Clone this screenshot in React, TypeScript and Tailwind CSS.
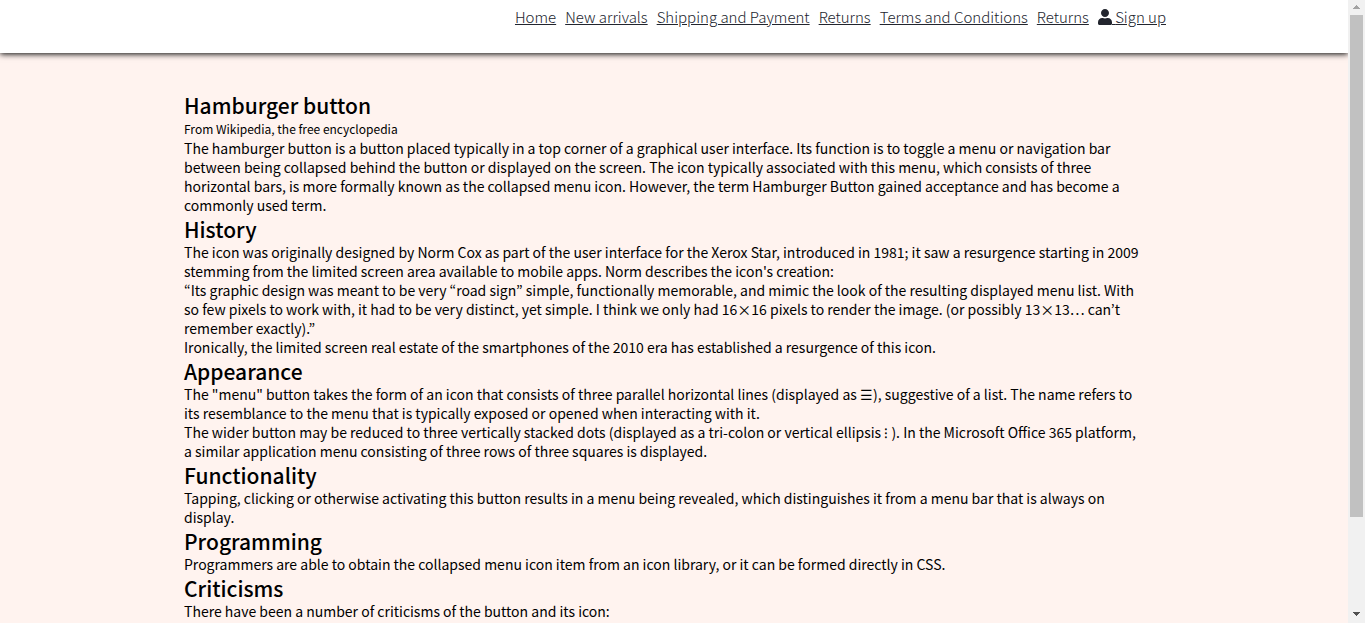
import React from "react";

const navItems = [
  "Home",
  "New arrivals",
  "Shipping and Payment",
  "Returns",
  "Terms and Conditions",
  "Returns",
];

type Section = { title: string; note?: string; paragraphs: string[] };

const sections: Section[] = [
  {
    title: "Hamburger button",
    note: "From Wikipedia, the free encyclopedia",
    paragraphs: [
      "The hamburger button is a button placed typically in a top corner of a graphical user interface. Its function is to toggle a menu or navigation bar between being collapsed behind the button or displayed on the screen. The icon typically associated with this menu, which consists of three horizontal bars, is more formally known as the collapsed menu icon. However, the term Hamburger Button gained acceptance and has become a commonly used term.",
    ],
  },
  {
    title: "History",
    paragraphs: [
      "The icon was originally designed by Norm Cox as part of the user interface for the Xerox Star, introduced in 1981; it saw a resurgence starting in 2009 stemming from the limited screen area available to mobile apps. Norm describes the icon's creation:",
      "“Its graphic design was meant to be very “road sign” simple, functionally memorable, and mimic the look of the resulting displayed menu list. With so few pixels to work with, it had to be very distinct, yet simple. I think we only had 16×16 pixels to render the image. (or possibly 13×13… can’t remember exactly).”",
      "Ironically, the limited screen real estate of the smartphones of the 2010 era has established a resurgence of this icon.",
    ],
  },
  {
    title: "Appearance",
    paragraphs: [
      "The \"menu\" button takes the form of an icon that consists of three parallel horizontal lines (displayed as ☰), suggestive of a list. The name refers to its resemblance to the menu that is typically exposed or opened when interacting with it.",
      "The wider button may be reduced to three vertically stacked dots (displayed as a tri-colon or vertical ellipsis ⁝ ). In the Microsoft Office 365 platform, a similar application menu consisting of three rows of three squares is displayed.",
    ],
  },
  {
    title: "Functionality",
    paragraphs: [
      "Tapping, clicking or otherwise activating this button results in a menu being revealed, which distinguishes it from a menu bar that is always on display.",
    ],
  },
  {
    title: "Programming",
    paragraphs: [
      "Programmers are able to obtain the collapsed menu icon item from an icon library, or it can be formed directly in CSS.",
    ],
  },
  {
    title: "Criticisms",
    paragraphs: [
      "There have been a number of criticisms of the button and its icon:",
    ],
  },
];

export default function App() {
  return (
    <div className="flex h-screen overflow-hidden bg-[#fff3ef] font-['Noto_Sans_CJK_KR',sans-serif] text-[15px] leading-[19px] text-black">
      <div className="min-w-0 flex-1 overflow-hidden">
        <header className="h-[53px] bg-white shadow-[0_1px_6px_#000]">
          <nav className="mx-auto flex max-w-[984px] justify-end gap-[9px] pt-[7px] font-light text-[#22252e]">
            {navItems.map((item, i) => (
              <a key={i} href="#" className="underline">
                {item}
              </a>
            ))}
            <a href="#" className="underline">
              <svg viewBox="0 0 448 512" className="inline-block h-4 w-[14px] align-[-2px]" fill="currentColor" aria-hidden="true">
                <path d="M224 256c70.7 0 128-57.3 128-128S294.700 0 224 0 96 57.300 96 128s57.300 128 128 128zm89.600 32h-16.700c-22.200 10.200-46.900 16-72.900 16s-50.600-5.800-72.900-16h-16.700C60.200 288 0 348.200 0 422.400V464c0 26.500 21.500 48 48 48h352c26.500 0 48-21.500 48-48v-41.600c0-74.200-60.200-134.400-134.400-134.400z" />
              </svg>{" "}
              Sign up
            </a>
          </nav>
        </header>
        <main className="mx-auto max-w-[980px] pt-[38px] pr-5 text-sm leading-[19px]">
          {sections.map((s) => (
            <section key={s.title}>
              <h2 className="text-[21px] leading-7 font-medium">{s.title}</h2>
              {s.note && <p className="text-xs leading-5">{s.note}</p>}
              {s.paragraphs.map((p) => (
                <p key={p}>{p}</p>
              ))}
            </section>
          ))}
        </main>
      </div>
      <div className="flex w-[17px] shrink-0 flex-col items-center justify-between bg-[#f1f1f1]" aria-hidden="true">
        <svg viewBox="0 0 17 15" className="h-[15px] w-full shrink-0" shapeRendering="crispEdges">
          <path d="M5 9h7L8.500 5z" fill="#a3a3a3" />
        </svg>
        <div className="min-h-0 w-[13px] flex-1">
          <div className="h-[85%] bg-[#c1c1c1]" />
        </div>
        <svg viewBox="0 0 17 17" className="h-[17px] w-full shrink-0" shapeRendering="crispEdges">
          <path d="M5 6h7L8.500 10z" fill="#505050" />
        </svg>
      </div>
    </div>
  );
}
